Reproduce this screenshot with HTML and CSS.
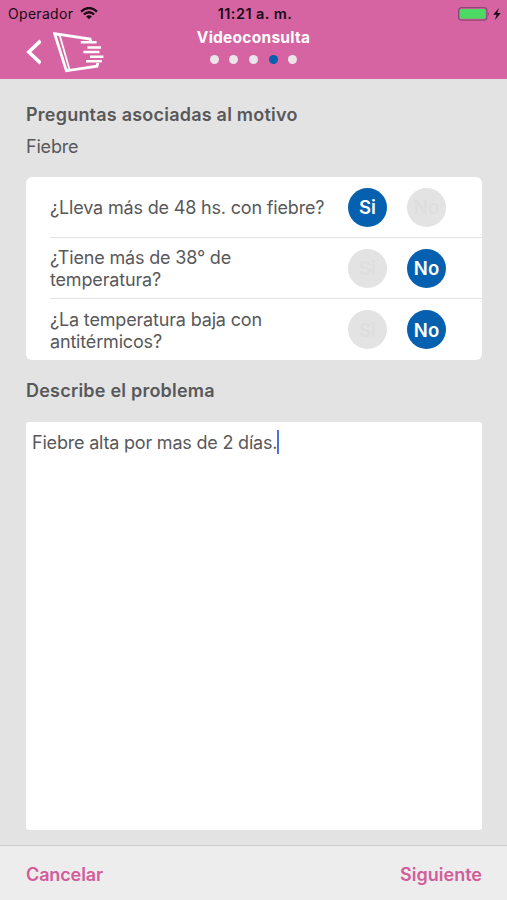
FILE: index.html
```html
<!DOCTYPE html>
<html lang="es">
<head>
    <meta charset="utf-8">
    <title>Videoconsulta</title>
    <link rel="stylesheet" href="styles.css">
</head>
<body>
    <header class="header">
        <div class="status-bar">
            <div class="carrier">
                <span class="carrier-name">Operador</span>
                <svg class="wifi" width="18" height="13" viewBox="0 0 18 13">
                    <path d="M1 4.6 Q9 -2.6 17 4.6" />
                    <path d="M3.8 7.5 Q9 3 14.2 7.5" />
                    <path class="wifi-dot" d="M6.1 9.4 Q9 7.2 11.9 9.4 L9 12.3 Z" />
                </svg>
            </div>
            <span class="time">11:21 a. m.</span>
            <svg class="battery" width="44" height="14" viewBox="0 0 44 14">
                <rect x="0.6" y="0.6" width="28.3" height="12.6" rx="3" fill="none" stroke="#914477" stroke-width="1.2" />
                <rect x="2" y="2" width="25.5" height="9.8" rx="1.4" fill="#4cd964" />
                <path d="M30.2 5 Q31.8 7 30.2 9 Z" fill="#7b3864" />
                <path d="M41 1 L35.2 7.8 H38.6 L36.8 13.2 L42.7 6.1 H39.2 Z" fill="#1a0a14" />
            </svg>
        </div>
        <div class="nav">
            <div class="nav-left">
                <svg class="back" width="16" height="26" viewBox="0 0 16 26">
                    <path d="M15.6 1.8 L3.8 13 L15.6 24.2" />
                </svg>
                <svg class="logo" width="52" height="43" viewBox="0 0 52 43">
                    <path class="logo-edge" d="M38 11 L37 8 L1.6 2.6 L13.4 39.8 L44 35.2 L44.8 32" />
                    <path class="logo-door" d="M3 3 L6.8 4.6 L16.6 39" />
                    <path class="logo-line" d="M27.8 11.3 H43.6 M34.4 16.5 H48 M30.4 21 H46.4 M37 25.7 H50.4 M33 30.3 H48.8" />
                </svg>
            </div>
            <div class="nav-center">
                <h1 class="title">Videoconsulta</h1>
                <div class="dots">
                    <span class="dot"></span>
                    <span class="dot"></span>
                    <span class="dot"></span>
                    <span class="dot active"></span>
                    <span class="dot"></span>
                </div>
            </div>
        </div>
    </header>

    <main class="content">
        <h2 class="heading heading-questions">Preguntas asociadas al motivo</h2>
        <p class="reason">Fiebre</p>

        <div class="questions">
            <div class="question">
                <span class="question-text">¿Lleva más de 48 hs. con fiebre?</span>
                <button class="option selected">Si</button>
                <button class="option">No</button>
            </div>
            <div class="question">
                <span class="question-text">¿Tiene más de 38° de<br>temperatura?</span>
                <button class="option">Si</button>
                <button class="option selected">No</button>
            </div>
            <div class="question">
                <span class="question-text">¿La temperatura baja con<br>antitérmicos?</span>
                <button class="option">Si</button>
                <button class="option selected">No</button>
            </div>
        </div>

        <h2 class="heading heading-problem">Describe el problema</h2>
        <div class="problem">
            <span class="problem-text">Fiebre alta por mas de 2 días.</span><span class="caret"></span>
        </div>
    </main>

    <footer class="footer">
        <a class="action cancel">Cancelar</a>
        <a class="action next">Siguiente</a>
    </footer>
</body>
</html>
```

FILE: styles.css
```css
* {
    box-sizing: border-box;
}

body {
    margin: 0;
    height: 900px;
    display: flex;
    flex-direction: column;
    overflow: hidden;
    background: #e3e3e3;
    color: #58585a;
    font-family: Inter, "Liberation Sans", sans-serif;
}

h1, h2, p {
    margin: 0;
}

.header {
    height: 79px;
    flex: none;
    background: #d664a3;
}

.status-bar {
    height: 27px;
    padding: 0 5px 0 8px;
    display: grid;
    grid-template-columns: 1fr auto 1fr;
    align-items: center;
    color: #1a0a14;
    font-size: 14px;
}

.carrier {
    display: flex;
    align-items: center;
    gap: 7px;
}

.carrier-name {
    letter-spacing: 0.3px;
}

.wifi {
    fill: none;
    stroke: #1a0a14;
    stroke-width: 2.2;
}

.wifi .wifi-dot {
    fill: #1a0a14;
    stroke: none;
}

.time {
    font-size: 14.5px;
    font-weight: 600;
    letter-spacing: 0.45px;
}

.battery {
    justify-self: end;
}

.nav {
    height: 52px;
    display: grid;
    grid-template-columns: 1fr auto 1fr;
}

.nav-left {
    display: flex;
    padding: 4px 0 0 25px;
}

.back {
    margin-top: 8px;
    fill: none;
    stroke: #fff;
    stroke-width: 3.6;
}

.logo {
    margin-left: 12px;
    fill: none;
    stroke: #fff;
}

.logo-edge {
    stroke-width: 2.8;
}

.logo-door {
    stroke-width: 1.8;
}

.logo-line {
    stroke-width: 2.6;
}

.nav-center {
    display: flex;
    flex-direction: column;
    align-items: center;
    padding-top: 1px;
}

.title {
    color: #fff;
    font-size: 15.5px;
    line-height: 20px;
    font-weight: 700;
    letter-spacing: 0.25px;
}

.dots {
    display: flex;
    gap: 10.6px;
    margin-top: 7px;
}

.dot {
    width: 9px;
    height: 9px;
    border-radius: 50%;
    background: #ebe5e9;
}

.dot.active {
    background: #0560b0;
}

.content {
    flex: 1;
    display: flex;
    flex-direction: column;
    padding: 24px 25px 15px 26px;
}

.heading {
    font-size: 18px;
    line-height: 24px;
    font-weight: 600;
    letter-spacing: 0.22px;
}

.reason {
    margin-top: 8px;
    font-size: 18px;
    line-height: 24px;
    letter-spacing: -0.2px;
}

.questions {
    margin-top: 18px;
    padding-left: 24px;
    background: #fff;
    border-radius: 6px;
}

.question {
    height: 61px;
    display: flex;
    align-items: center;
    padding-right: 36px;
    border-bottom: 1px solid #e3e3e3;
}

.question:last-child {
    border-bottom: none;
}

.question-text {
    flex: 1;
    padding-top: 2px;
    font-size: 18px;
    line-height: 22px;
    letter-spacing: -0.17px;
    white-space: nowrap;
}

.option {
    width: 39px;
    height: 39px;
    padding: 0;
    border: none;
    border-radius: 50%;
    background: #e3e3e3;
    color: #dedede;
    font-family: inherit;
    font-size: 18.5px;
    font-weight: 600;
}

.option + .option {
    margin-left: 20px;
}

.option.selected {
    background: #0560b0;
    color: #fff;
}

.heading-problem {
    margin-top: 19px;
}

.problem {
    flex: 1;
    display: flex;
    align-items: flex-start;
    margin-top: 19px;
    padding: 8px 6px;
    background: #fff;
    border-radius: 3px;
}

.problem-text {
    font-size: 18px;
    line-height: 25px;
    letter-spacing: -0.2px;
}

.caret {
    width: 2px;
    height: 24px;
    background: #4a72e0;
}

.footer {
    height: 55px;
    flex: none;
    display: flex;
    justify-content: space-between;
    align-items: center;
    padding: 2px 25px 0 26px;
    border-top: 1px solid #cecece;
    background: #ededee;
}

.action {
    color: #d35c9b;
    font-size: 18px;
    font-weight: 600;
}

.cancel {
    letter-spacing: -0.12px;
}
```
